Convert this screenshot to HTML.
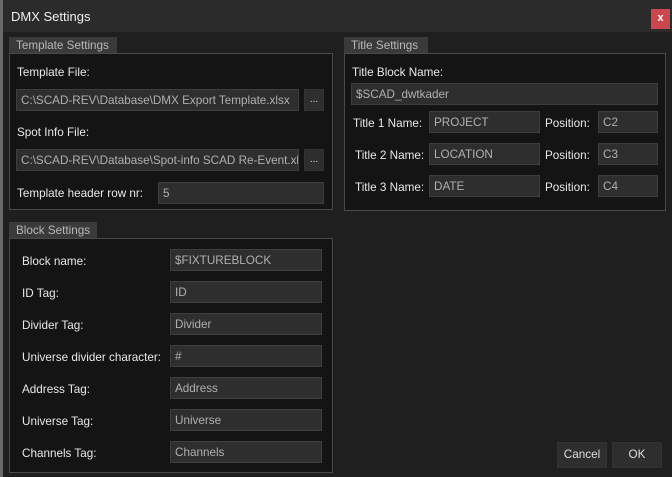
<!DOCTYPE html>
<html><head><style>
*{box-sizing:border-box;margin:0;padding:0}
body{width:672px;height:477px;background:#1f1f1f;font-family:"Liberation Sans",sans-serif;font-size:11.7px;color:#e8e8e8;position:relative;overflow:hidden}
.a{position:absolute}
.tb{left:0;top:0;width:672px;height:32px;background:#2b2b2b}
.lb{left:0;top:0;width:3px;height:477px;background:#6a6a6a}
.tab{background:#3a3a3a;color:#b8b8b8;padding:2px 0 0 7px;height:17px}
.box{background:#141414;border:1px solid #4a4a4a}
.in{background:#2e2e2e;border:1px solid #3e3e3e;color:#b0b0b0;padding:0 4px;line-height:22px;white-space:nowrap;overflow:hidden}
.btn{background:#2e2e2e;border:1px solid #333;color:#ddd;text-align:center}
.lab{white-space:nowrap;margin-top:2px}
</style></head><body>
<div class="a tb"></div>
<div class="a" style="left:11px;top:9px;font-size:13px;color:#eee">DMX Settings</div>
<div class="a" style="left:651px;top:9px;width:19px;height:20px;background:#c9474d;color:#fff;font-size:11px;text-align:center;line-height:19px;font-weight:bold">x</div>
<div class="a lb"></div>

<div class="a tab" style="left:9px;top:37px;width:108px">Template Settings</div>
<div class="a box" style="left:9px;top:53px;width:324px;height:157px"></div>
<div class="a lab" style="left:17px;top:64px">Template File:</div>
<div class="a in" style="left:16px;top:89px;width:283px;height:22px">C:\SCAD-REV\Database\DMX Export Template.xlsx</div>
<div class="a btn" style="left:304px;top:89px;width:20px;height:22px;line-height:20px;font-size:10px">...</div>
<div class="a lab" style="left:17px;top:124px">Spot Info File:</div>
<div class="a in" style="left:16px;top:149px;width:283px;height:22px">C:\SCAD-REV\Database\Spot-info SCAD Re-Event.xlsx</div>
<div class="a btn" style="left:304px;top:149px;width:20px;height:22px;line-height:20px;font-size:10px">...</div>
<div class="a lab" style="left:17px;top:185px">Template header row nr:</div>
<div class="a in" style="left:158px;top:182px;width:166px;height:22px">5</div>

<div class="a tab" style="left:9px;top:222px;width:88px">Block Settings</div>
<div class="a box" style="left:9px;top:238px;width:324px;height:235px"></div>
<div class="a lab" style="left:22px;top:253px">Block name:</div>
<div class="a in" style="left:170px;top:249px;width:152px;height:22px">$FIXTUREBLOCK</div>
<div class="a lab" style="left:22px;top:285px">ID Tag:</div>
<div class="a in" style="left:170px;top:281px;width:152px;height:22px">ID</div>
<div class="a lab" style="left:22px;top:317px">Divider Tag:</div>
<div class="a in" style="left:170px;top:313px;width:152px;height:22px">Divider</div>
<div class="a lab" style="left:22px;top:349px">Universe divider character:</div>
<div class="a in" style="left:170px;top:345px;width:152px;height:22px">#</div>
<div class="a lab" style="left:22px;top:381px">Address Tag:</div>
<div class="a in" style="left:170px;top:377px;width:152px;height:22px">Address</div>
<div class="a lab" style="left:22px;top:413px">Universe Tag:</div>
<div class="a in" style="left:170px;top:409px;width:152px;height:22px">Universe</div>
<div class="a lab" style="left:22px;top:445px">Channels Tag:</div>
<div class="a in" style="left:170px;top:441px;width:152px;height:22px">Channels</div>

<div class="a tab" style="left:344px;top:37px;width:84px">Title Settings</div>
<div class="a box" style="left:344px;top:53px;width:322px;height:158px"></div>
<div class="a lab" style="left:352px;top:64px">Title Block Name:</div>
<div class="a in" style="left:351px;top:83px;width:307px;height:22px">$SCAD_dwtkader</div>
<div class="a lab" style="left:353px;top:115px">Title 1 Name:</div>
<div class="a in" style="left:429px;top:111px;width:111px;height:22px">PROJECT</div>
<div class="a lab" style="left:545px;top:115px">Position:</div>
<div class="a in" style="left:598px;top:111px;width:60px;height:22px">C2</div>
<div class="a lab" style="left:355px;top:147px">Title 2 Name:</div>
<div class="a in" style="left:429px;top:143px;width:111px;height:22px">LOCATION</div>
<div class="a lab" style="left:545px;top:147px">Position:</div>
<div class="a in" style="left:598px;top:143px;width:60px;height:22px">C3</div>
<div class="a lab" style="left:355px;top:179px">Title 3 Name:</div>
<div class="a in" style="left:429px;top:175px;width:111px;height:22px">DATE</div>
<div class="a lab" style="left:545px;top:179px">Position:</div>
<div class="a in" style="left:598px;top:175px;width:60px;height:22px">C4</div>

<div class="a btn" style="left:557px;top:442px;width:50px;height:26px;line-height:24px">Cancel</div>
<div class="a btn" style="left:612px;top:442px;width:50px;height:26px;line-height:24px">OK</div>
</body></html>
